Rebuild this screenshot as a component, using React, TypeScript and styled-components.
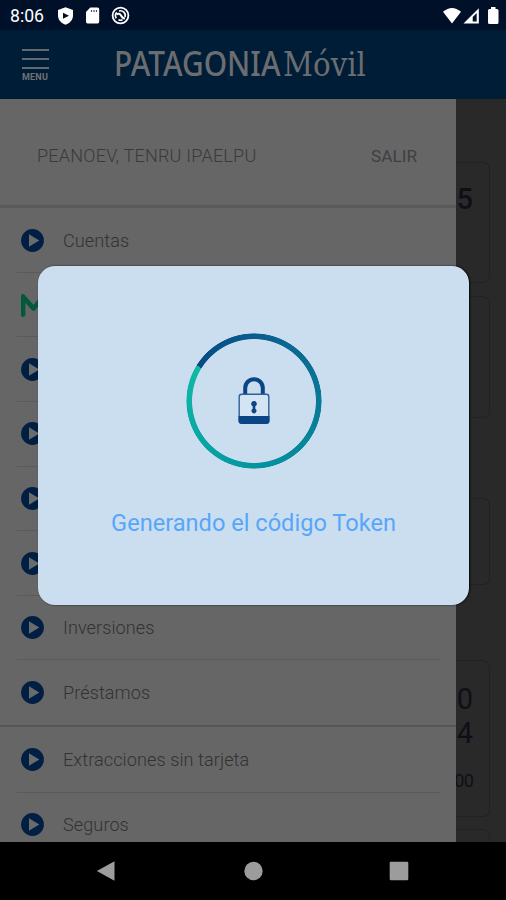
import React from "react";
import styled, { createGlobalStyle } from "styled-components";

const GlobalStyle = createGlobalStyle`
  * { box-sizing: border-box; }
  html, body { margin: 0; background: #000; }
  svg { display: block; flex: none; }
`;

const Screen = styled.div`
  position: relative;
  width: 506px;
  height: 900px;
  overflow: hidden;
  display: flex;
  flex-direction: column;
  font-family: Roboto, "Liberation Sans", sans-serif;
`;

const StatusBar = styled.div`
  height: 30px;
  flex: none;
  padding: 1px 7px 0 10px;
  display: flex;
  align-items: center;
  background: #001029;
  color: #fff;
`;

const Clock = styled.span`
  width: 47px;
  font-size: 17.6px;
  line-height: 28px;
`;

const StatusIcons = styled.div<{ $end?: boolean }>`
  display: flex;
  align-items: center;
  gap: ${(p) => (p.$end ? 0 : 11)}px;
  margin-left: ${(p) => (p.$end ? "auto" : 0)};
`;

const Header = styled.header`
  height: 69px;
  flex: none;
  display: flex;
  align-items: center;
  background: #001d37;
  padding-left: 22px;
`;

const MenuButton = styled.div`
  width: 27px;
  margin-top: 0;
  display: flex;
  flex-direction: column;
  gap: 7px;
  color: #707274;
`;

const MenuBar = styled.i`
  height: 2px;
  background: #66696b;
`;

const MenuLabel = styled.span`
  margin-top: -3px;
  font-size: 9px;
  line-height: 8px;
  font-weight: 700;
  letter-spacing: 0.2px;
  height: 8px;
`;

const Logo = styled.svg`
  margin-left: 65px;
  overflow: visible;
`;

const Body = styled.div`
  flex: 1;
  min-height: 0;
  display: flex;
  overflow: hidden;
`;

const Drawer = styled.nav`
  width: 456px;
  flex: none;
  background: #666;
  overflow: hidden;
`;

const Profile = styled.div`
  height: 109px;
  padding: 6px 39px 0 37px;
  display: flex;
  align-items: center;
  justify-content: space-between;
  border-bottom: 3px solid #595959;
  color: #3a3a3a;
  font-size: 18px;
`;

const UserName = styled.span`
  font-weight: 300;
  letter-spacing: 0.23px;
`;

const Logout = styled.span`
  padding-top: 2px;
  color: #3f3f43;
  font-size: 17.2px;
`;

const Group = styled.div<{ $last?: boolean }>`
  padding-top: ${(p) => (p.$last ? 1 : 0.3)}px;
  border-bottom: ${(p) => (p.$last ? 0 : 2)}px solid #565656;
`;

const Row = styled.div`
  height: 64.6px;
  margin: 0 16px 0 17px;
  padding-left: 4px;
  display: flex;
  align-items: center;
  gap: 19px;
  border-bottom: 1px solid #5a5a5a;
  color: #323232;
  font-size: 18.1px;
  letter-spacing: 0.08px;
  font-weight: 300;
  white-space: nowrap;

  &:last-child { border-bottom: 0; }
`;

const Side = styled.div`
  flex: 1;
  background: #292929;
  overflow: hidden;
  padding-top: 63px;
`;

const Card = styled.div<{ $h: number; $gap: number }>`
  width: 34px;
  height: ${(p) => p.$h}px;
  margin-bottom: ${(p) => p.$gap}px;
  padding-right: 16px;
  border: 1px solid #222;
  border-left: 0;
  border-radius: 0 7px 7px 0;
  display: flex;
  flex-direction: column;
  align-items: flex-end;
  color: #0f0f18;
`;

const Amount = styled.span<{ $top: number; $bold?: boolean }>`
  margin-top: ${(p) => p.$top}px;
  font-size: 29px;
  line-height: 34px;
  font-weight: ${(p) => (p.$bold ? 500 : 400)};
`;

const SmallAmount = styled.span`
  margin-top: 20px;
  font-size: 18px;
  line-height: 22px;
  letter-spacing: -0.8px;
`;

const NavBar = styled.div`
  height: 58px;
  flex: none;
  background: #000;
  display: flex;
  justify-content: space-between;
  align-items: center;
  padding: 0 97px 0 96px;
`;

const Dialog = styled.div`
  position: absolute;
  left: 38px;
  top: 266px;
  width: 431px;
  height: 339px;
  border-radius: 17px;
  background: #cbdeef;
  box-shadow: 1px 0 2px 0 rgba(0, 0, 0, 0.85);
  display: flex;
  flex-direction: column;
  align-items: center;
  padding-top: 67px;
`;

const Spinner = styled.div`
  position: relative;
  width: 136px;
  height: 136px;
  display: grid;
  place-items: center;

  &::before {
    content: "";
    position: absolute;
    inset: 0;
    border-radius: 50%;
    background: conic-gradient(from -58deg, #064a86, #0b6090 19%, #087b96 42%, #04959f 66%, #0aa9a6 84%, #10baa4);
    mask: radial-gradient(closest-side, transparent 61.5px, #000 62.3px, #000 67.2px, transparent 68px);
  }
`;

const Message = styled.p`
  margin: 37px 0 0;
  color: #58a6fa;
  font-size: 23.6px;
  line-height: 34px;
  white-space: nowrap;
`;

const PlayIcon = () => (
  <svg width="23" height="23" viewBox="0 0 23 23">
    <circle cx="11.5" cy="11.5" r="11.4" fill="#011f42" />
    <path d="M8 5.2v12.6l10.3-6.3z" fill="#696b6d" />
  </svg>
);

const ModoIcon = () => (
  <svg width="26" height="26" viewBox="0 0 26 26">
    <path d="M2 22.500V4.500L12.500 16.500L22.500 4.500V22.500" fill="none" stroke="#06583d" strokeWidth="4.800" strokeLinecap="round" strokeLinejoin="round" />
  </svg>
);

const LockIcon = () => (
  <svg width="32" height="48" viewBox="0 0 32 48">
    <path d="M7.200 17V11a8.800 8.800 0 0 1 17.600 0v6" fill="none" stroke="#0a4586" strokeWidth="4" />
    <rect x="1.200" y="17.200" width="29.600" height="28.800" rx="2.500" fill="#d3e4f3" stroke="#2f6099" strokeWidth="1.400" />
    <path d="M.5 39h31v5a3 3 0 0 1-3 3h-25a3 3 0 0 1-3-3z" fill="#0a4586" />
    <path d="M16 24a2.800 2.800 0 0 1 1.300 5.300v2.500a2.400 2.400 0 1 1-2.600 0v-2.500A2.800 2.800 0 0 1 16 24z" fill="#0a4586" />
  </svg>
);

const mainItems = ["Cuentas", "MODO", "Tarjetas", "Transferencias", "Pagos", "Recargas", "Inversiones", "Préstamos"];
const moreItems = ["Extracciones sin tarjeta", "Seguros"];

const MenuRow = ({ label, covered }: { label: string; covered?: boolean }) => (
  <Row>
    {label === "MODO" ? <ModoIcon /> : <PlayIcon />}
    {!covered && <span>{label}</span>}
  </Row>
);

export default function App() {
  return (
    <Screen>
      <GlobalStyle />
      <StatusBar>
        <Clock>8:06</Clock>
        <StatusIcons>
          <svg width="17" height="18" viewBox="0 0 17 18">
            <path d="M8.500.3L16 3v5.500c0 4.300-3 7.600-7.500 9.200C4 16.100 1 12.800 1 8.500V3z" fill="#fff" />
            <path d="M6 5.800v6l6-3z" fill="#001029" />
          </svg>
          <svg width="15" height="17" viewBox="0 0 15 17">
            <path d="M5.300.5h7.200a1.700 1.700 0 0 1 1.700 1.700v12.600a1.700 1.700 0 0 1-1.700 1.700H2.700A1.700 1.700 0 0 1 1 14.800V5z" fill="#fff" />
            <path d="M6.500 3v2M9 3v2M11.500 3v2" stroke="#4a5266" strokeWidth="1.200" />
          </svg>
          <svg width="19" height="19" viewBox="0 0 19 19" fill="none" stroke="#fff">
            <circle cx="9.500" cy="9.500" r="7.900" strokeWidth="1.800" />
            <path d="M5.300 12.300A4.800 4.800 0 0 1 5.800 6.400M8 5A4.800 4.800 0 0 1 14 11M11.500 13.800A4.800 4.800 0 0 1 7.500 13.800" strokeWidth="1.700" />
            <path d="M5.500 8.500Q8.500 6.500 10 9.500T14 12.500" strokeWidth="1.900" />
          </svg>
        </StatusIcons>
        <StatusIcons $end>
          <svg width="57" height="18" viewBox="0 0 57 18">
            <path d="M1 4.800Q10 -2.800 19 4.800L10 16.500z" fill="#fff" />
            <path d="M36.800 1.300V16.500H21.500z" fill="#fff" />
            <path d="M34.700 6v8.600h-4V10z" fill="#001029" />
            <path d="M49 0h4.500v2H55a1.500 1.500 0 0 1 1.500 1.500V15.500A1.500 1.500 0 0 1 55 17h-7.500a1.500 1.500 0 0 1-1.500-1.500V3.500A1.500 1.500 0 0 1 47.500 2H49z" fill="#fff" />
          </svg>
        </StatusIcons>
      </StatusBar>
      <Header>
        <MenuButton>
          <MenuBar />
          <MenuBar />
          <MenuBar />
          <MenuLabel>MENU</MenuLabel>
        </MenuButton>
        <Logo width="256" height="48" viewBox="0 0 256 48" fill="#6b6d70">
          <text x="0" y="34.500" fontFamily='"Noto Sans", sans-serif' fontSize="34.500" fontWeight="500" textLength="166.500" lengthAdjust="spacingAndGlyphs">PATAGONIA</text>
          <text x="169" y="34.500" fontFamily='"DejaVu Serif", serif' fontSize="33.500" textLength="83" lengthAdjust="spacingAndGlyphs">Móvil</text>
        </Logo>
      </Header>
      <Body>
        <Drawer>
          <Profile>
            <UserName>PEANOEV, TENRU IPAELPU</UserName>
            <Logout>SALIR</Logout>
          </Profile>
          <Group>
            {mainItems.map((label, i) => (
              <MenuRow key={label} label={label} covered={i > 0 && i < 6} />
            ))}
          </Group>
          <Group $last>
            {moreItems.map((label) => (
              <MenuRow key={label} label={label} />
            ))}
          </Group>
        </Drawer>
        <Side>
          <Card $h={121} $gap={13}><Amount $top={19} $bold>5</Amount></Card>
          <Card $h={122} $gap={80} />
          <Card $h={87} $gap={75} />
          <Card $h={157} $gap={12}>
            <Amount $top={21}>0</Amount>
            <Amount $top={0}>4</Amount>
            <SmallAmount>00</SmallAmount>
          </Card>
          <Card $h={60} $gap={0} />
        </Side>
      </Body>
      <NavBar>
        <svg width="19" height="20" viewBox="0 0 19 20"><path d="M.8 10L18.500.3v19.400z" fill="#9c9c9c" /></svg>
        <svg width="24" height="20" viewBox="0 0 24 20"><circle cx="13.500" cy="10" r="9.200" fill="#9c9c9c" /></svg>
        <svg width="20" height="20" viewBox="0 0 20 20"><rect x=".7" y=".7" width="18.600" height="18.600" rx="1.200" fill="#9c9c9c" /></svg>
      </NavBar>
      <Dialog>
        <Spinner><LockIcon /></Spinner>
        <Message>Generando el código Token</Message>
      </Dialog>
    </Screen>
  );
}
